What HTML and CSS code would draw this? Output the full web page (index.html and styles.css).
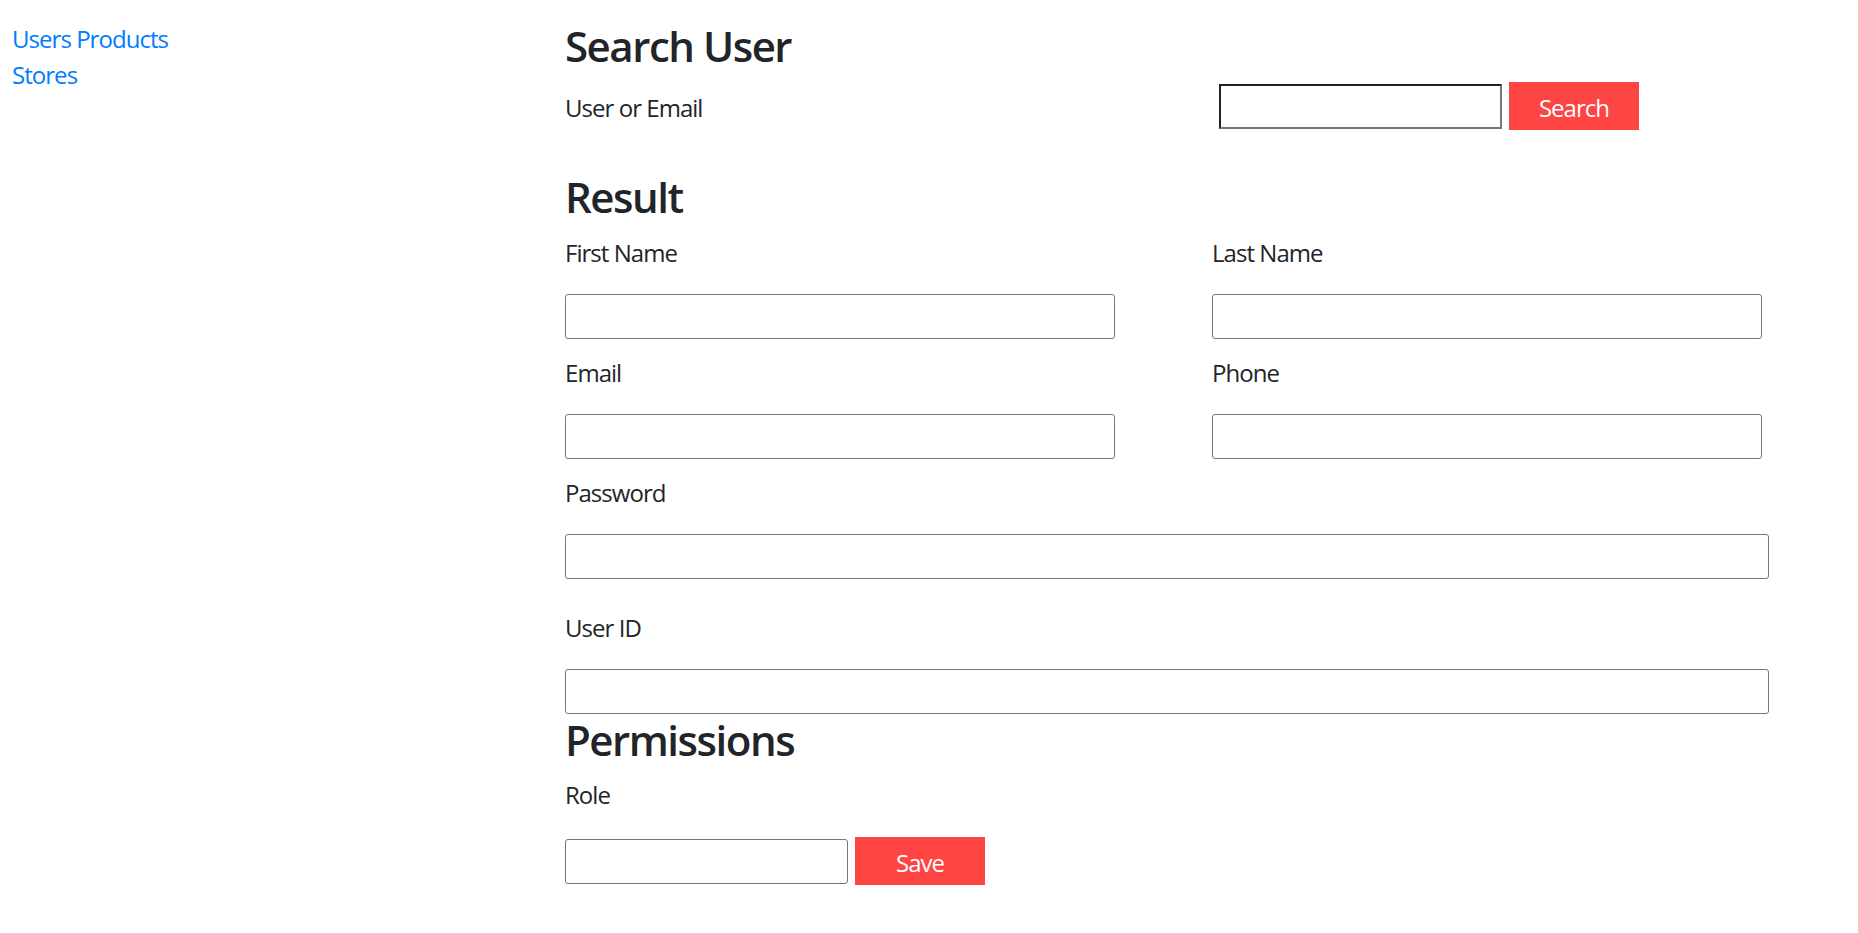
FILE: index.html
```html
<!DOCTYPE html>
<html lang="en">
<head>
<meta charset="utf-8">
<title>Search User</title>
<link rel="stylesheet" href="styles.css">
</head>
<body>
<div class="layout">
  <nav class="sidenav">
    <div class="nav-line"><a href="#">Users</a> <a href="#">Products</a></div>
    <div class="nav-line"><a href="#">Stores</a></div>
  </nav>
  <main class="content">
    <h3 class="heading heading-search">Search User</h3>
    <div class="search-row">
      <label class="label-inline">User or Email</label>
      <div class="inline-controls">
        <input class="input-inset" type="text">
        <button class="btn-red" type="button">Search</button>
      </div>
    </div>

    <h3 class="heading heading-result">Result</h3>
    <div class="two-col">
      <div class="group">
        <label class="label">First Name</label>
        <input class="input" type="text">
      </div>
      <div class="group">
        <label class="label">Last Name</label>
        <input class="input" type="text">
      </div>
      <div class="group">
        <label class="label">Email</label>
        <input class="input" type="text">
      </div>
      <div class="group">
        <label class="label">Phone</label>
        <input class="input" type="text">
      </div>
    </div>
    <div class="group group-wide">
      <label class="label">Password</label>
      <input class="input input-full" type="password">
    </div>
    <div class="group group-last">
      <label class="label">User ID</label>
      <input class="input input-full" type="text">
    </div>

    <h3 class="heading heading-perm">Permissions</h3>
    <label class="label label-role">Role</label>
    <div class="inline-controls">
      <input class="input input-role" type="text">
      <button class="btn-red" type="button">Save</button>
    </div>
  </main>
</div>
</body>
</html>
```

FILE: styles.css
```css
* { box-sizing: border-box; }

html, body {
  margin: 0;
  padding: 0;
  background: #ffffff;
}

body {
  font-family: "Open Sans", "Noto Sans", "Liberation Sans", sans-serif;
  font-size: 24px;
  line-height: 36px;
  letter-spacing: -0.04em;
  color: #212529;
}

.layout {
  display: flex;
  align-items: flex-start;
}

.sidenav {
  width: 565px;
  flex: 0 0 565px;
  padding: 21px 0 0 12px;
}

.nav-line a {
  color: #007bff;
  text-decoration: none;
}

.content {
  width: 1205px;
  padding-top: 21px;
}

.heading {
  margin: 0 0 12px 0;
  font-size: 42px;
  line-height: 1.2;
  font-weight: 600;
  letter-spacing: -0.035em;
  color: #212529;
}

.heading-search { margin-bottom: 11px; }
.heading-result { margin-top: 42px; }
.heading-perm { margin-top: 1px; }

.search-row {
  display: grid;
  grid-template-columns: 654px auto;
  align-items: center;
  height: 48px;
}

.label-inline {
  display: block;
  padding-top: 3px;
}

.inline-controls {
  display: flex;
  align-items: center;
  gap: 7px;
  height: 48px;
}

.input-inset {
  width: 283px;
  height: 45px;
  margin: 0;
  border-width: 2px;
  border-style: solid;
  border-color: #222 #777 #777 #222;
  background: #fff;
  font: inherit;
  padding: 0 4px;
}

.btn-red {
  width: 130px;
  height: 48px;
  margin: 0;
  border: 0;
  background: #ff4444;
  color: #ffffff;
  font-family: inherit;
  font-size: 24px;
  line-height: 36px;
  letter-spacing: -0.04em;
  padding: 3px 0 0 0;
  cursor: pointer;
}

.two-col {
  display: grid;
  grid-template-columns: 550px 550px;
  column-gap: 97px;
}

.group { margin-bottom: 16px; }
.group-wide { margin-bottom: 31px; }
.group-last { margin-bottom: 0; }

.label {
  display: block;
  margin-bottom: 23px;
}

.label-role { margin-bottom: 24px; }

.input {
  display: block;
  width: 100%;
  height: 45px;
  margin: 0;
  border: 1px solid #767676;
  border-radius: 3px;
  background: #fff;
  font: inherit;
  padding: 0 4px;
}

.input-full { width: 1204px; }

.input-role {
  display: block;
  width: 283px;
}
```
